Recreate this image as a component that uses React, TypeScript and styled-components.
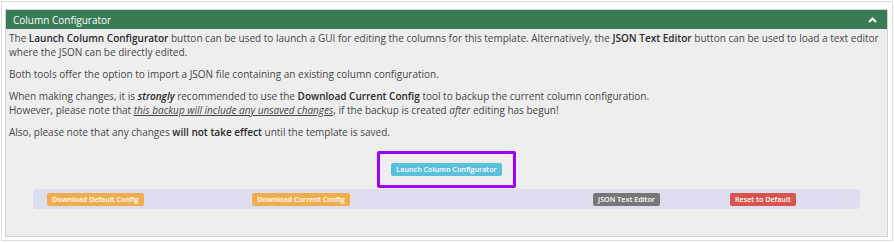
import styled, { createGlobalStyle } from 'styled-components'

const GlobalStyle = createGlobalStyle`
    html, body {
        margin: 0;
        padding: 0;
        background: #ffffff;
    }
    body {
        font-family: "Open Sans", "Noto Sans", sans-serif;
    }
`

const Frame = styled.div`
    box-sizing: border-box;
    width: 892px;
    height: 240px;
    margin: 1px 0 0 1px;
    border: 1px solid #dedede;
    padding: 7px 4px 3px 3px;
    background: #ffffff;
`

const Panel = styled.section`
    box-sizing: border-box;
    height: 100%;
    border: 1px solid #d2d2d2;
    background: #eeeeee;
    display: flex;
    flex-direction: column;
`

const Header = styled.header`
    height: 19px;
    background: #387b55;
    color: #ffffff;
    display: flex;
    align-items: center;
    justify-content: space-between;
    padding: 0 10px 0 7px;
    font-size: 10px;
`

const Body = styled.div`
    padding: 2px 2px 0 3px;
    color: #474747;
    font-size: 10px;
    line-height: 14px;
`

const Para = styled.p`
    margin: 0 0 8px;

    b {
        color: #2a2a2a;
        font-weight: 600;
    }
    u {
        text-underline-offset: 1px;
    }
`

const LaunchRow = styled.div`
    display: flex;
    justify-content: center;
    margin-top: 4px;
`

const Highlight = styled.div`
    box-sizing: border-box;
    width: 139px;
    height: 37px;
    border: 3px solid #a100ff;
    border-radius: 2px;
    display: flex;
    align-items: center;
    justify-content: center;
`

const Btn = styled.button<{ $bg: string }>`
    box-sizing: border-box;
    height: 13px;
    padding: 0 5px;
    border: none;
    border-radius: 2px;
    background: ${(p) => p.$bg};
    color: #ffffff;
    font-family: "Open Sans", "Noto Sans", sans-serif;
    font-size: 7.2px;
    font-weight: 600;
    line-height: 13px;
    white-space: nowrap;
    cursor: pointer;
`

const ToolBar = styled.div`
    margin: 1px 27px 0;
    height: 20px;
    border-radius: 3px;
    background: #dfdeee;
    display: grid;
    grid-template-columns: 205px 341px 137px auto;
    align-items: center;
    justify-items: start;
    padding-left: 14px;
`

const Chevron = () => (
    <svg width="9" height="6" viewBox="0 0 9 6">
        <polyline points="1,5 4.5,1.5 8,5" fill="none" stroke="#ffffff" strokeWidth="2" />
    </svg>
)

const App = () => {
    return (
        <>
            <GlobalStyle />
            <Frame>
                <Panel>
                    <Header>
                        <span>Column Configurator</span>
                        <Chevron />
                    </Header>
                    <Body>
                        <Para>
                            The <b>Launch Column Configurator</b> button can be used to launch a GUI for editing the columns for this template. Alternatively, the <b>JSON Text Editor</b> button can be used to load a text editor
                            <br />
                            where the JSON can be directly edited.
                        </Para>
                        <Para>Both tools offer the option to import a JSON file containing an existing column configuration.</Para>
                        <Para>
                            When making changes, it is <b><i>strongly</i></b> recommended to use the <b>Download Current Config</b> tool to backup the current column configuration.
                            <br />
                            However, please note that <u><i>this backup will include any unsaved changes</i></u>, if the backup is created <i>after</i> editing has begun!
                        </Para>
                        <Para>
                            Also, please note that any changes <b>will not take effect</b> until the template is saved.
                        </Para>
                    </Body>
                    <LaunchRow>
                        <Highlight>
                            <Btn $bg="#5bc0de">Launch Column Configurator</Btn>
                        </Highlight>
                    </LaunchRow>
                    <ToolBar>
                        <Btn $bg="#f0ad4e">Download Default Config</Btn>
                        <Btn $bg="#f0ad4e">Download Current Config</Btn>
                        <Btn $bg="#777777">JSON Text Editor</Btn>
                        <Btn $bg="#d9534f">Reset to Default</Btn>
                    </ToolBar>
                </Panel>
            </Frame>
        </>
    )
}

export default App
